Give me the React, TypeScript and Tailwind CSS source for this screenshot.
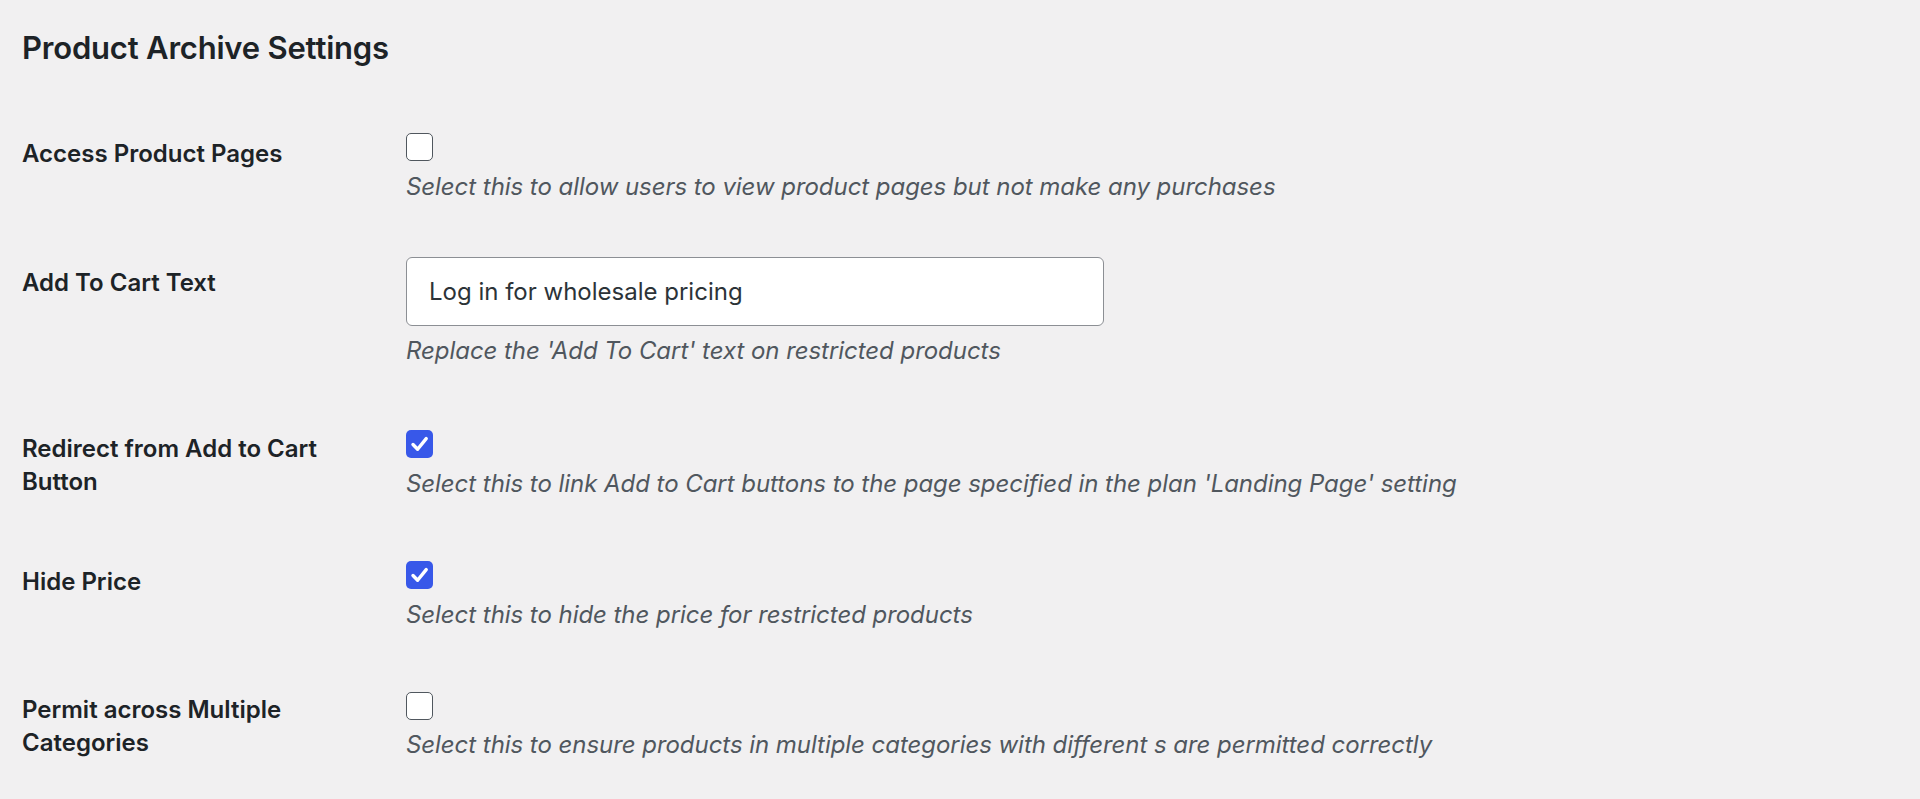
import type { ReactNode } from 'react';

const font = { fontFamily: 'Inter, "Noto Sans", sans-serif' };

function Checkbox({ checked }: { checked?: boolean }) {
  if (checked) {
    return (
      <span className="block h-[28px] w-[27px] rounded-[5px] bg-[#3858e9]">
        <svg width="27" height="28" viewBox="0 0 27 28" fill="none">
          <path d="M7 14.5 L11.6 19.2 L20.2 8.6" stroke="#fff" strokeWidth="3.4" strokeLinecap="round" strokeLinejoin="round" />
        </svg>
      </span>
    );
  }
  return <span className="block h-[28px] w-[27px] rounded-[5px] border-[1.5px] border-[#50575e] bg-white" />;
}

function Description({ children, className = '' }: { children: ReactNode; className?: string }) {
  return (
    <p className={`text-[24px] italic leading-[33px] tracking-[-0.05px] text-[#50575e] ${className}`}>{children}</p>
  );
}

function Row({
  label,
  className,
  labelClass,
  children,
}: {
  label: string;
  className: string;
  labelClass: string;
  children: ReactNode;
}) {
  return (
    <div className={`flex ${className}`}>
      <div className={`w-[384px] shrink-0 pr-[44px] text-[24px] font-semibold leading-[33px] text-[#1d2327] ${labelClass}`}>
        {label}
      </div>
      <div className="flex flex-col">{children}</div>
    </div>
  );
}

export default function App() {
  return (
    <div className="min-h-screen bg-[#f1f0f1] pl-[22px] pt-[28px]" style={font}>
      <h2 className="text-[31px] font-semibold leading-[40px] tracking-[-0.2px] text-[#1d2327]">
        Product Archive Settings
      </h2>

      <Row label="Access Product Pages" className="mt-[65px]" labelClass="pt-[4px]">
        <Checkbox />
        <Description className="mt-[9px]">
          Select this to allow users to view product pages but not make any purchases
        </Description>
      </Row>

      <Row label="Add To Cart Text" className="mt-[54px]" labelClass="pt-[9px]">
        <div className="flex h-[69px] w-[698px] items-center rounded-[6px] border-[1.5px] border-[#8c8f94] bg-white pl-[22px] text-[24px] text-[#2c3338]">
          Log in for wholesale pricing
        </div>
        <Description className="mt-[8px]">Replace the 'Add To Cart' text on restricted products</Description>
      </Row>

      <Row label="Redirect from Add to Cart Button" className="mt-[63px]" labelClass="pt-[2px]">
        <Checkbox checked />
        <Description className="mt-[9px]">
          Select this to link Add to Cart buttons to the page specified in the plan 'Landing Page' setting
        </Description>
      </Row>

      <Row label="Hide Price" className="mt-[61px]" labelClass="pt-[4px]">
        <Checkbox checked />
        <Description className="mt-[9px]">Select this to hide the price for restricted products</Description>
      </Row>

      <Row label="Permit across Multiple Categories" className="mt-[61px]" labelClass="pt-[1px]">
        <Checkbox />
        <Description className="mt-[8px]">
          Select this to ensure products in multiple categories with different s are permitted correctly
        </Description>
      </Row>
    </div>
  );
}
